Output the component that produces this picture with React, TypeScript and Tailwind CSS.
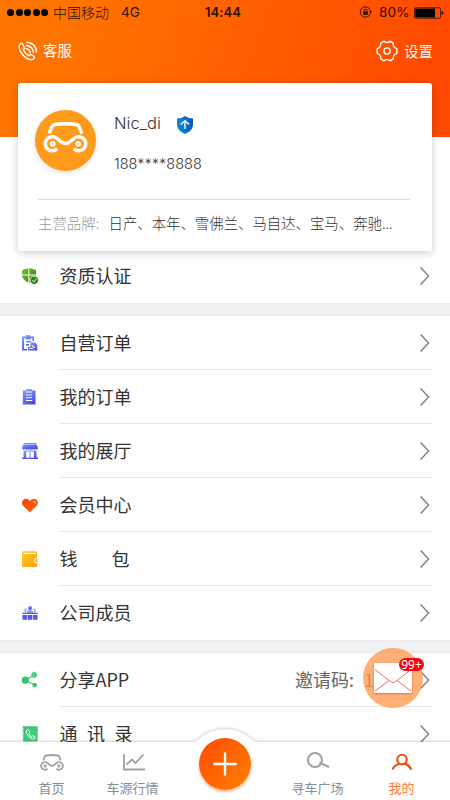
import React from "react";

type Box = { className?: string };

const BLUE = "url(#blue)";

function Defs() {
  return (
    <svg width="0" height="0" className="absolute">
      <defs>
        <linearGradient id="blue" x1="0" y1="0" x2="0.6" y2="1">
          <stop offset="0" stopColor="#83a8f6" />
          <stop offset="1" stopColor="#4b48ef" />
        </linearGradient>
        <linearGradient id="green" x1="0" y1="0" x2="1" y2="1">
          <stop offset="0" stopColor="#6cbf2c" />
          <stop offset="1" stopColor="#35850f" />
        </linearGradient>
        <linearGradient id="mint" x1="0" y1="0" x2="1" y2="1">
          <stop offset="0" stopColor="#33c26b" />
          <stop offset="1" stopColor="#4fd283" />
        </linearGradient>
        <linearGradient id="gold" x1="0" y1="0" x2="1" y2="1">
          <stop offset="0" stopColor="#ffc928" />
          <stop offset="1" stopColor="#ffa00e" />
        </linearGradient>
        <linearGradient id="red" x1="0" y1="0" x2="1" y2="0.4">
          <stop offset="0" stopColor="#fb3a08" />
          <stop offset="1" stopColor="#ff6410" />
        </linearGradient>
        <linearGradient id="shield" x1="0" y1="0" x2="1" y2="0">
          <stop offset="0" stopColor="#1585e2" />
          <stop offset="0.5" stopColor="#0b74d2" />
          <stop offset="1" stopColor="#0559b4" />
        </linearGradient>
      </defs>
    </svg>
  );
}

function CarMark({ className }: Box) {
  return (
    <svg viewBox="0 0 46 32" className={className} fill="none" stroke="currentColor">
      <path d="M6.200 12 L9 4.800 Q9.800 3 12 2.600 Q23 .8 34 2.600 Q36.200 3 37 4.800 L39.800 12" strokeWidth="3.600" />
      <path d="M14.600 27.600 A7.300 7.300 0 1 1 14.300 17.100 C18 20 19.500 22.300 23 22.300 C26.500 22.300 28 20 31.700 17.100 A7.300 7.300 0 1 1 31.400 27.600" strokeWidth="3.600" />
      <circle cx="9.800" cy="22.500" r="1.900" strokeWidth="2.200" />
      <circle cx="36.200" cy="22.500" r="1.900" strokeWidth="2.200" />
    </svg>
  );
}

function PhoneIcon() {
  return (
    <svg viewBox="0 0 20 20" className="h-5 w-5" fill="none" stroke="#fff" strokeWidth="1.400" strokeLinecap="round" strokeLinejoin="round">
      <path d="M3 2.400 Q.8 4 1.100 6.500 C2 12 7 17.500 12.500 18.800 Q15 19 16.300 16.900 Q16.800 16 15.900 15.300 L13.200 13.600 Q12.400 13.200 11.700 13.900 L10.900 14.700 C8.500 13.600 6.300 11.300 5.300 8.800 L6.100 7.900 Q6.700 7.200 6.300 6.400 L4.700 3 Q4 1.800 3 2.400Z" />
      <path d="M8 7.600 Q11.800 8.200 12.300 11.800" />
      <path d="M8.600 4.500 Q14.600 5.300 15.400 11.400" />
      <path d="M9.200 1.300 Q17.800 2.300 18.500 11" />
    </svg>
  );
}

function GearIcon() {
  return (
    <svg viewBox="0 0 22 22" className="h-[22px] w-[22px]" fill="none" stroke="#fff" strokeWidth="1.400" strokeLinejoin="round">
      <path d="M8 1.200 Q11 3.900 14 1.200 L17.300 3.100 Q16.700 7.200 20.800 8.700 Q21.100 11 20.800 13.300 Q16.700 14.800 17.300 18.900 L14 20.800 Q11 18.100 8 20.800 L4.700 18.900 Q5.300 14.800 1.200 13.300 Q.9 11 1.200 8.700 Q5.300 7.200 4.700 3.100Z" />
      <circle cx="11" cy="11" r="3.100" />
    </svg>
  );
}

function Chevron() {
  return (
    <svg viewBox="0 0 10 18" className="h-[18px] w-[10px] shrink-0" fill="none" stroke="#808080" strokeWidth="1.400">
      <path d="M.6 .4 L8.600 9 L.6 17.600" />
    </svg>
  );
}

function Glyph({ children }: { children: React.ReactNode }) {
  return (
    <svg viewBox="0 0 16 16" className="ml-[22px] h-4 w-4 shrink-0 overflow-visible">
      {children}
    </svg>
  );
}

const certIcon = (
  <Glyph>
    <path d="M7 0 L14 2 V8 Q13.500 12.500 7 15 Q.5 12 .2 8 V2Z" fill="url(#green)" />
    <path d="M6.800 0 V15 M0 7 H14" stroke="#fff" strokeWidth="1" />
    <circle cx="12.300" cy="12.300" r="4.200" fill="#35850f" stroke="#fff" strokeWidth=".8" />
    <path d="M10.200 12.300 L11.800 13.800 L14.400 10.900" fill="none" stroke="#fff" strokeWidth="1" />
  </Glyph>
);
const selfOrderIcon = (
  <Glyph>
    <path d="M0 1.500 H3.500 V.2 H8.500 V1.500 H12 V6 H10.500 V3.300 H8.500 V4.500 H3.500 V3.300 H2 V14 H5 V15.500 H0Z" fill={BLUE} />
    <path d="M4 6 H9 V7.500 H4Z M4 9 H7 V10.500 H4Z" fill={BLUE} />
    <path d="M8.500 7.500 H13 L15.200 10 V15.500 H6 V12 H8.500Z" fill={BLUE} />
    <path d="M10 10.300 L13 13 M7.500 13.500 H11" stroke="#fff" strokeWidth="1.100" />
  </Glyph>
);
const orderIcon = (
  <Glyph>
    <path d="M.8 1.500 H4 V.2 H10 V1.500 H13.500 V15.500 H.8Z" fill={BLUE} />
    <path d="M4 3 H10.200 M4 6 H10.200 M4 8.700 H10.200 M4 11.500 H10.200" stroke="#fff" strokeWidth="1" />
  </Glyph>
);
const hallIcon = (
  <Glyph>
    <path d="M1.500 0 H14.500 V1.500 H1.500Z M1 2 H15 L16 5.500 Q15 7 13.300 6 Q11.800 7.300 10.600 6 Q9.300 7.300 8 6 Q6.700 7.300 5.400 6 Q4 7.300 2.700 6 Q1 7 0 5.500Z" fill={BLUE} />
    <path d="M1.500 7.500 H14.500 V14.500 H16 V16 H0 V14.500 H1.500Z" fill={BLUE} />
    <path d="M4.200 8.500 H7.600 V14.700 H4.200Z M8.500 8.500 H11.900 V14.700 H8.500Z" fill="#fff" />
  </Glyph>
);
const heartIcon = (
  <Glyph>
    <path d="M8 15.600 L1 8.600 C-1.300 5.300 .8 1.800 4 1.800 Q6.500 1.800 8 4 Q9.500 1.800 12 1.800 C15.200 1.800 17.300 5.300 15 8.600Z" fill="url(#red)" />
    <path d="M11.300 4 Q13.300 4.300 13.300 6.500" stroke="#ffd9c8" strokeWidth=".9" fill="none" />
  </Glyph>
);
const walletIcon = (
  <Glyph>
    <rect x="0" y=".3" width="15" height="15.700" rx="1.500" fill="url(#gold)" />
    <path d="M1.500 1.800 H13.500 V3 H1.500Z" fill="#fff" />
    <path d="M16 7 H14.500 Q12.500 7.300 12.500 9.500 Q12.500 11.800 14.500 12 H16Z" fill="#ffb41b" stroke="#fff" strokeWidth="1" />
  </Glyph>
);
const staffIcon = (
  <Glyph>
    <circle cx="8" cy="3" r="2" fill={BLUE} />
    <path d="M5 8 V6.500 Q5 5 8 5 Q11 5 11 6.500 V8Z M2.500 4.500 Q3 3 4.500 3.800 L4 7.500 H2.800Z M13.500 4.500 Q13 3 11.500 3.800 L12 7.500 H13.200Z" fill="#8a9df6" />
    <path d="M.3 7.700 H15.700 V9 H.3Z M.5 10 H4.900 V14.700 H.5Z M5.700 10 H10.300 V14.700 H5.700Z M11.100 10 H15.500 V14.700 H11.100Z" fill="#5250f0" />
    <path d="M2.500 13 H2.700 M8 13 H8.200 M13.200 13 H13.400" stroke="#fff" strokeWidth="1" />
  </Glyph>
);
const shareIcon = (
  <Glyph>
    <path d="M3.500 8.200 L12 3 M3.500 8.200 L12.500 13" stroke="#42c97a" strokeWidth="1.200" />
    <circle cx="3.300" cy="8.200" r="3.600" fill="#37c46f" />
    <circle cx="12.200" cy="2.900" r="2.900" fill="#4bcf80" />
    <circle cx="12.700" cy="13.100" r="2.300" fill="#37c46f" />
  </Glyph>
);
const contactsIcon = (
  <Glyph>
    <rect x=".8" y=".3" width="15" height="15.200" rx="1" fill="url(#mint)" />
    <path d="M1 2 V15" stroke="#fff" strokeWidth="1.200" strokeDasharray="1 1.500" />
    <path d="M5.300 3.500 Q3.500 4.800 4.500 7.200 Q6.300 11.500 10.600 13 Q12.800 13.200 13 11.200 L10.800 9.700 L9.300 10.600 Q7.600 9.600 7 7.500 L7.700 6.300 L6.500 3.500Z" fill="none" stroke="#fff" strokeWidth="1" strokeLinejoin="round" />
  </Glyph>
);

type RowProps = { icon: React.ReactNode; label: React.ReactNode; last?: boolean; children?: React.ReactNode };

function Row({ icon, label, last, children }: RowProps) {
  return (
    <div className="flex h-[54px] shrink-0 items-center bg-white">
      {icon}
      <div
        className={
          "ml-[21px] mr-[3px] flex h-full flex-1 items-center border-b " +
          (last ? "border-transparent" : "border-[#e8e8e8]")
        }
      >
        <span className="whitespace-pre pl-[0.500px] text-[18px] leading-[23px] text-[#333]">{label}</span>
        <span className="ml-auto" />
        {children}
      </div>
      <div className="-ml-4 mr-5 shrink-0">
        <Chevron />
      </div>
    </div>
  );
}

function Gap() {
  return <div className="h-[13px] shrink-0 border-y border-[#eaebed] bg-[#f0f1f3]" />;
}

function StatusBar() {
  return (
    <div className="flex h-[25px] items-center pl-[7px] pr-[5px] text-[14px] text-[#2b1000]">
      <div className="flex gap-[1.500px]">
        {[0, 1, 2, 3, 4].map((n) => (
          <i key={n} className="h-[7px] w-[7px] rounded-full bg-black" />
        ))}
      </div>
      <span className="ml-[5px] w-[57px] whitespace-nowrap font-light">中国移动</span>
      <span className="ml-[11px] w-[84px] font-['Inter'] text-[13.500px]">4G</span>
      <span className="font-['Inter'] text-[13px] font-semibold tracking-[0.1px]">14:44</span>
      <svg viewBox="0 0 14 14" className="ml-auto h-[13px] w-[14px]" fill="none" stroke="#2b1000" strokeWidth="1">
        <path d="M11.800 8 A5.600 5.600 0 1 1 11.800 5" />
        <path d="M10.300 5.500 H13.500 L11.900 8Z" fill="#2b1000" stroke="none" />
        <path d="M4 6 H9 V9.500 H4Z" fill="#2b1000" stroke="none" />
        <path d="M5 6 V4.600 Q5 3.500 6.500 3.500 Q8 3.500 8 4.600 V6" />
      </svg>
      <span className="ml-[6px] w-[35px] font-['Inter'] text-[13.500px] tracking-[0.2px]">80%</span>
      <svg viewBox="0 0 30 12" className="mr-[1px] h-3 w-[30px]">
        <rect x=".5" y=".8" width="26" height="10.400" rx="1" fill="none" stroke="#2b1000" strokeWidth=".8" />
        <rect x="1.300" y="1.600" width="19.700" height="8.800" fill="#000" />
        <path d="M27.500 4 Q29.500 4.500 29.500 6 Q29.500 7.500 27.500 8Z" fill="#2b1000" />
      </svg>
    </div>
  );
}

function ProfileCard() {
  return (
    <div className="relative z-10 mx-[18px] -mt-[54px] flex h-[168px] shrink-0 flex-col rounded-[3px] bg-white px-[17px] shadow-[0_2px_9px_rgba(0,0,0,0.2)]">
      <div className="flex h-[116px] pt-[27px]">
        <div className="flex h-[61px] w-[61px] items-start justify-center rounded-full bg-[#ff9a1a] pt-[12px] text-white shadow-[0_2px_3px_2px_rgba(0,0,0,0.06)]">
          <CarMark className="h-[31px] w-[45px]" />
        </div>
        <div className="ml-[18px] font-['Inter'] font-light text-[#333]">
          <div className="flex h-[26px] items-center">
            <span className="w-[63px] text-[16.500px]">Nic_di</span>
            <svg viewBox="0 0 16 18" className="mt-[3px] h-[18px] w-4">
              <path d="M8 0 Q11.500 2.500 16 2.600 V9 Q15.500 15 8 18 Q.5 15 0 9 V2.600 Q4.500 2.500 8 0Z" fill="url(#shield)" />
              <path d="M8 13 V5 M3.800 8.600 L8 4.800 L12.200 8.600" fill="none" stroke="#fff" strokeWidth="1.400" />
            </svg>
          </div>
          <div className="mt-[15px] text-[14.500px] leading-[25px]">188****8888</div>
        </div>
      </div>
      <div className="ml-[3px] mr-[5px] flex h-[50px] items-center whitespace-nowrap border-t border-[#dedede] pb-[3px] text-[14.400px]">
        <span className="w-[70.500px] font-light text-[#999]">主营品牌<span className="font-['Inter']">:</span></span>
        <span className="font-light text-[#333]">日产、本年、雪佛兰、马自达、宝马、奔驰...</span>
      </div>
    </div>
  );
}

function MailBubble() {
  return (
    <div className="absolute left-[363px] top-[648px] z-20 flex h-[60px] w-[60px] items-center justify-center rounded-full bg-[#ff9648]/75">
      <svg viewBox="0 0 40 32" className="h-8 w-10 drop-shadow-[0_1px_1px_rgba(200,40,20,0.45)]">
        <rect x="1" y="1" width="38" height="30" rx="1" fill="#fff" />
        <path d="M2 7.500 L17.500 19.500 Q20 22 22.500 19.500 L38 7.500 M2 29 L16 18.500 M38 29 L24 18.500" fill="none" stroke="#f0705a" strokeWidth="1" />
      </svg>
      <span className="absolute left-[36px] top-[10px] flex h-[13px] w-[25px] items-center justify-center rounded-full bg-[#fa0010] font-['Noto_Sans'] text-[12px] text-white">
        99+
      </span>
    </div>
  );
}

function Tab({ label, children, active, className }: { label: string; children: React.ReactNode; active?: boolean; className: string }) {
  return (
    <div className={"flex shrink-0 flex-col items-center pt-[11px] " + className}>
      <div className="flex h-5 items-center">{children}</div>
      <span className={"mt-[7px] whitespace-nowrap text-[13px] leading-[18px] " + (active ? "text-[#ff7a30]" : "text-[#868e96]")}>{label}</span>
    </div>
  );
}

function TabBar() {
  return (
    <div className="absolute inset-x-0 bottom-0 z-30 h-[59px]">
      <svg viewBox="0 0 450 75" className="absolute bottom-0 left-0 h-[75px] w-[450px] overflow-visible drop-shadow-[0_-1px_1.500px_rgba(0,0,0,0.18)]">
        <path d="M-5 17 H193 Q196 17 199 14 Q210 4 225 4 Q240 4 251 14 Q254 17 257 17 H455 V80 H-5Z" fill="#fff" />
      </svg>
      <div className="relative flex h-full">
        <Tab label="首页" className="w-[103px]">
          <CarMark className="h-[17px] w-6 text-[#a0a0a0]" />
        </Tab>
        <Tab label="车源行情" className="w-[59px]">
          <svg viewBox="0 0 24 18" className="ml-[2px] h-[18px] w-6" fill="none" stroke="#a0a0a0" strokeWidth="1.800">
            <path d="M2 1 V16.500 H23 M4.500 11.500 L10 6.500 L13.500 10 L21.500 1.500" />
          </svg>
        </Tab>
        <div className="flex w-[126px] shrink-0 items-start justify-center">
          <div className="-mt-[3px] flex h-[52px] w-[52px] items-center justify-center rounded-full bg-linear-to-br from-[#ff4700] to-[#ff8000] shadow-[0_2px_3px_rgba(255,80,0,0.4)]">
            <svg viewBox="0 0 24 24" className="h-6 w-6" stroke="#fff" strokeWidth="2.400" strokeLinecap="round">
              <path d="M12 1.500 V22.500 M1.500 12 H22.500" />
            </svg>
          </div>
        </div>
        <Tab label="寻车广场" className="w-[59px]">
          <svg viewBox="0 0 24 20" className="mb-[3px] h-5 w-6" fill="none" stroke="#a0a0a0" strokeWidth="2">
            <circle cx="9" cy="9" r="7" />
            <path d="M13.500 11.500 L23 16" />
          </svg>
        </Tab>
        <Tab label="我的" active className="w-[103px] pl-[6px]">
          <svg viewBox="0 0 22 18" className="h-[18px] w-[22px]" fill="none" stroke="#f14a0a" strokeWidth="2">
            <circle cx="11" cy="6.500" r="4.800" />
            <path d="M1.500 16.500 Q3.500 12 8.500 10.800 M13.300 10.300 Q18 12 20.500 16.500" />
          </svg>
        </Tab>
      </div>
    </div>
  );
}

export default function App() {
  return (
    <div className="relative flex h-[800px] w-[450px] flex-col overflow-hidden bg-white font-['Noto_Sans_CJK_SC',sans-serif]">
      <Defs />
      <header className="h-[137px] shrink-0 bg-[linear-gradient(107deg,#ff7400_15%,#ff4800_95%)]">
        <StatusBar />
        <div className="flex h-[52px] items-center justify-between pl-[18px] pr-[17px] text-[14.400px] text-white">
          <div className="flex items-center gap-[5px]">
            <PhoneIcon />
            <span className="-mt-[2px]">客服</span>
          </div>
          <div className="flex items-center gap-[6px]">
            <GearIcon />
            <span>设置</span>
          </div>
        </div>
      </header>
      <ProfileCard />
      <div className="-mt-[2px] shrink-0">
        <Row icon={certIcon} label="资质认证" last />
      </div>
      <Gap />
      <Row icon={selfOrderIcon} label="自营订单" />
      <Row icon={orderIcon} label="我的订单" />
      <Row icon={hallIcon} label="我的展厅" />
      <Row icon={heartIcon} label="会员中心" />
      <Row icon={walletIcon} label={<span className="flex w-[70px] justify-between"><i className="not-italic">钱</i><i className="not-italic">包</i></span>} />
      <Row icon={staffIcon} label="公司成员" last />
      <Gap />
      <Row icon={shareIcon} label="分享APP">
        <span className="flex w-[138px] whitespace-nowrap text-[18px] leading-[23px] text-[#666]">
          <span className="w-[69px]">邀请码:</span>
          <span>10</span>
        </span>
      </Row>
      <Row icon={contactsIcon} label={<span className="flex w-[73px] justify-between"><i className="not-italic">通</i><i className="not-italic">讯</i><i className="not-italic">录</i></span>} />
      <MailBubble />
      <TabBar />
    </div>
  );
}
